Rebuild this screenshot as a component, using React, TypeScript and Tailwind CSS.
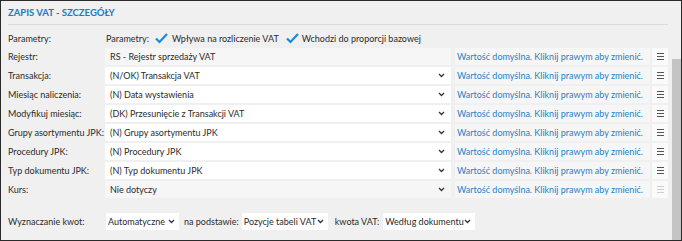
import React from 'react';

const Chevron: React.FC = () => (
  <svg width="7" height="5" viewBox="0 0 7 5" className="shrink-0">
    <polyline points="1,1 3.5,3.5 6,1" fill="none" stroke="#333" strokeWidth="1.3" />
  </svg>
);

const Check: React.FC = () => (
  <svg width="15" height="13" viewBox="0 0 15 13" className="shrink-0">
    <polyline points="2,6.5 5.5,10 13,2" fill="none" stroke="#1a8ad8" strokeWidth="2.2" />
  </svg>
);

const MenuIcon: React.FC<{ disabled?: boolean }> = ({ disabled }) => (
  <svg width="7" height="7" viewBox="0 0 7 7">
    <g stroke={disabled ? '#d0d0d0' : '#555'} strokeWidth="1">
      <line x1="0" y1="0.5" x2="7" y2="0.5" />
      <line x1="0" y1="3.5" x2="7" y2="3.5" />
      <line x1="0" y1="6.5" x2="7" y2="6.5" />
    </g>
  </svg>
);

interface Row {
  label: string;
  value: string;
  readonly?: boolean;
  dropdown?: boolean;
  disabledMenu?: boolean;
}

const rows: Row[] = [
  { label: 'Rejestr:', value: 'RS - Rejestr sprzedaży VAT', readonly: true },
  { label: 'Transakcja:', value: '(N/OK) Transakcja VAT', dropdown: true },
  { label: 'Miesiąc naliczenia:', value: '(N) Data wystawienia', dropdown: true },
  { label: 'Modyfikuj miesiąc:', value: '(DK) Przesunięcie z Transakcji VAT', dropdown: true },
  { label: 'Grupy asortymentu JPK:', value: '(N) Grupy asortymentu JPK', dropdown: true },
  { label: 'Procedury JPK:', value: '(N) Procedury JPK', dropdown: true },
  { label: 'Typ dokumentu JPK:', value: '(N) Typ dokumentu JPK', dropdown: true },
  { label: 'Kurs:', value: 'Nie dotyczy', readonly: true, dropdown: true, disabledMenu: true }
];

const SmallSelect: React.FC<{ value: string; width: string }> = ({ value, width }) => (
  <div className={`${width} h-[17px] bg-white flex items-center justify-between pl-[2px] pr-[4px] shrink-0`}>
    <span>{value}</span>
    <Chevron />
  </div>
);

export default function App() {
  return (
    <div className="w-[682px] h-[241px] border border-[#2a2a2a] bg-[#f0f0f0] flex text-[9px] text-[#2b2b2b] font-['Lato',sans-serif] leading-none whitespace-nowrap">
      <div className="flex-1 pl-[7px] pr-[4px] flex flex-col">
        <div className="h-[24px] border-b border-[#dddddd] flex items-center pt-[1px] text-[9.5px] font-bold text-[#1b7bbd]">
          ZAPIS VAT - SZCZEGÓŁY
        </div>

        <div className="mt-[4px] h-[19px] flex items-center">
          <span className="w-[98px] shrink-0">Parametry:</span>
          <span>Parametry:</span>
          <span className="ml-[5px]"><Check /></span>
          <span className="ml-[3px]">Wpływa na rozliczenie VAT</span>
          <span className="ml-[6px]"><Check /></span>
          <span className="ml-[2px]">Wchodzi do proporcji bazowej</span>
        </div>

        <div className="flex flex-col gap-[2px]">
          {rows.map((row) => (
            <div key={row.label} className="h-[17px] flex items-center">
              <span className="w-[97px] shrink-0">{row.label}</span>
              <div
                className={`w-[346px] h-full flex items-center justify-between pl-[5px] pr-[6px] ${
                  row.readonly ? 'bg-[#f6f6f6]' : 'bg-white'
                }`}
              >
                <span>{row.value}</span>
                {row.dropdown && <Chevron />}
              </div>
              <div className="ml-[4px] w-[195px] h-full bg-[#f6f6f6] flex items-center pl-[2px] text-[#2a7fc4]">
                Wartość domyślna. Kliknij prawym aby zmienić.
              </div>
              <div className="ml-[2px] w-[16px] h-full bg-[#fafafa] flex items-center justify-center">
                <MenuIcon disabled={row.disabledMenu} />
              </div>
            </div>
          ))}
        </div>

        <div className="mt-[15px] h-[17px] flex items-center">
          <span className="w-[98px] shrink-0">Wyznaczanie kwot:</span>
          <SmallSelect value="Automatyczne" width="w-[73px]" />
          <span className="ml-[5px] mr-[3px]">na podstawie:</span>
          <SmallSelect value="Pozycje tabeli VAT" width="w-[86px]" />
          <span className="ml-[7px] mr-[4px]">kwota VAT:</span>
          <SmallSelect value="Według dokumentu" width="w-[92px]" />
        </div>
      </div>
      <div className="w-[9px] mt-[58px] bg-[#c4c4c4]" />
    </div>
  );
}
